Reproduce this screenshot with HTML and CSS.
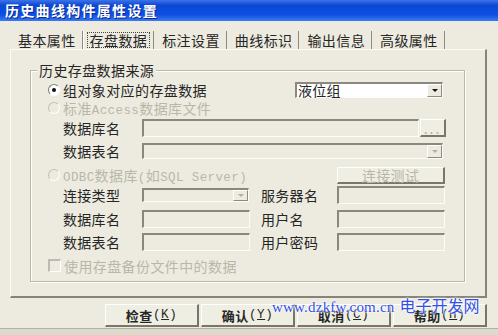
FILE: index.html
```html
<!DOCTYPE html>
<html lang="zh">

<head>
    <meta charset="UTF-8">
    <title>历史曲线构件属性设置</title>
    <link rel="stylesheet" href="styles.css">
</head>

<body>
    <div class="window">
        <div class="titlebar">历史曲线构件属性设置</div>

        <div class="client">
            <div class="tabs">
                <div class="tab">基本属性</div>
                <div class="tab active"><span class="focus">存盘数据</span></div>
                <div class="tab">标注设置</div>
                <div class="tab">曲线标识</div>
                <div class="tab">输出信息</div>
                <div class="tab">高级属性</div>
            </div>

            <div class="panel">
                <div class="group">
                    <span class="legend">历史存盘数据来源</span>

                    <div class="row row-short">
                        <span class="radio checked"></span>
                        <span class="opt">组对象对应的存盘数据</span>
                        <div class="combo combo-top">
                            <span class="combo-text">液位组</span>
                            <span class="drop"><span class="tri"></span></span>
                        </div>
                    </div>

                    <div class="row row-short">
                        <span class="radio disabled"></span>
                        <span class="opt off">标准<span class="lat">Access</span>数据库文件</span>
                    </div>

                    <div class="row">
                        <span class="label">数据库名</span>
                        <span class="field field-path"></span>
                        <span class="btn btn-dots">...</span>
                    </div>

                    <div class="row row-combo">
                        <span class="label">数据表名</span>
                        <div class="combo combo-table">
                            <span class="drop"><span class="tri off"></span></span>
                        </div>
                    </div>

                    <div class="row">
                        <span class="radio disabled"></span>
                        <span class="opt off opt-odbc"><span class="lat">ODBC</span>数据库<span class="lat">(</span>如<span class="lat">SQL Server)</span></span>
                        <span class="btn btn-test">连接测试</span>
                    </div>

                    <div class="row">
                        <span class="label">连接类型</span>
                        <div class="combo combo-type">
                            <span class="drop"><span class="tri off"></span></span>
                        </div>
                        <span class="label label-right">服务器名</span>
                        <span class="field field-small"></span>
                    </div>

                    <div class="row">
                        <span class="label">数据库名</span>
                        <span class="field field-small"></span>
                        <span class="label label-right">用户名</span>
                        <span class="field field-small"></span>
                    </div>

                    <div class="row">
                        <span class="label">数据表名</span>
                        <span class="field field-small"></span>
                        <span class="label label-right">用户密码</span>
                        <span class="field field-small"></span>
                    </div>

                    <div class="row row-short">
                        <span class="check"></span>
                        <span class="opt off">使用存盘备份文件中的数据</span>
                    </div>
                </div>
            </div>

            <div class="actions">
                <span class="btn btn-main">检查<span class="lat">(<u>K</u>)</span></span>
                <span class="btn btn-main">确认<span class="lat">(<u>Y</u>)</span></span>
                <span class="btn btn-main">取消<span class="lat">(<u>C</u>)</span></span>
                <span class="btn btn-main">帮助<span class="lat">(<u>H</u>)</span></span>
            </div>
        </div>

        <div class="bottom"></div>

        <div class="watermark"><span class="wm-url">www.dzkfw.com.cn</span> <span class="wm-name">电子开发网</span></div>
    </div>
</body>

</html>
```

FILE: styles.css
```css
body {
    margin: 0;
    font-family: "Noto Sans CJK SC", sans-serif;
    font-size: 14px;
    color: #262626;
}

.window {
    position: relative;
    width: 498px;
    height: 335px;
    background-color: #edebdf;
    display: flex;
    flex-direction: column;
    overflow: hidden;
}

.titlebar {
    height: 21px;
    line-height: 21px;
    padding-left: 5px;
    color: #fff;
    font-weight: bold;
    letter-spacing: 1.3px;
    text-shadow: 1px 1px 0 #0a2a90;
    background: linear-gradient(#3d74e6, #0b48d6 25%, #0d4fe2 70%, #3a7af4);
}

.client {
    flex: 1;
    padding: 10px 11px 0 10px;
    display: flex;
    flex-direction: column;
}

.lat {
    font-family: "Liberation Mono", monospace;
    font-size: 12.5px;
}

/* tabs */
.tabs {
    display: flex;
    height: 18px;
}

.tab {
    padding: 0 6px 0 7px;
    line-height: 18px;
    border-right: 1px solid #8d8b80;
    border-left: 1px solid transparent;
    letter-spacing: 0.4px;
}

.tab.active {
    border-left-color: #fff;
    padding: 0 4px;
}

.focus {
    display: inline-block;
    line-height: 14px;
    padding: 0 2px;
    outline: 1px dotted #444;
}

.panel {
    height: 226px;
    border-top: 1px solid #fbfbf6;
    border-left: 1px solid #fbfbf6;
    border-right: 2px solid #85837a;
    border-bottom: 2px solid #85837a;
    padding: 20px 0 0 19px;
}

/* group box */
.group {
    position: relative;
    width: 416px;
    height: 199px;
    border: 1px solid #b9b7aa;
    box-shadow: 1px 1px 0 #fff, inset 1px 1px 0 #fff;
    padding: 11px 0 0 17px;
    display: grid;
    grid-template-rows: 18px 19px 24px 23px 20px 24px 23px 25px 14px;
    align-items: start;
}

.legend {
    position: absolute;
    top: -10px;
    left: 6px;
    padding: 0 2px;
    background-color: #edebdf;
    line-height: 18px;
    letter-spacing: 0.4px;
}

.row {
    display: flex;
    align-items: center;
    height: 18px;
}

.row-short {
    height: 15px;
}

.row-combo {
    height: 16px;
}

.opt {
    margin-left: 3px;
    letter-spacing: 0.4px;
    white-space: nowrap;
}

.opt-odbc {
    width: 274px;
}

.off {
    color: #b9b7aa;
}

.label {
    width: 79px;
    flex: none;
    margin-left: 15px;
    letter-spacing: 0.3px;
}

.label-right {
    width: 76px;
    margin-left: 11px;
}

/* radio / check */
.radio {
    width: 10px;
    height: 10px;
    border-radius: 50%;
    border: 1px solid;
    border-color: #7d7b70 #fff #fff #7d7b70;
    background-color: #fff;
    display: flex;
    align-items: center;
    justify-content: center;
}

.radio.checked::after {
    content: "";
    width: 4px;
    height: 4px;
    border-radius: 50%;
    background-color: #111;
}

.radio.disabled {
    border-color: #c2c0b3 #fff #fff #c2c0b3;
    background-color: #edebdf;
}

.check {
    width: 10px;
    height: 10px;
    border: 1px solid;
    border-color: #bdbbaf #fff #fff #bdbbaf;
    border-top-width: 2px;
    border-left-width: 2px;
}

/* fields */
.field,
.combo {
    box-sizing: border-box;
    height: 18px;
    flex: none;
    border-style: solid;
    border-width: 2px 1px 1px 2px;
    border-color: #8a887e #fdfdf8 #fdfdf8 #8a887e;
}

.field-path {
    width: 277px;
}

.field-small {
    width: 108px;
}

.combo {
    display: flex;
    justify-content: flex-end;
    align-items: stretch;
    height: 16px;
}

.combo-top {
    width: 148px;
    margin-left: 88px;
    background-color: #fff;
    justify-content: space-between;
}

.combo-text {
    line-height: 13px;
    padding-left: 1px;
    letter-spacing: 0.3px;
}

.combo-table {
    width: 301px;
}

.combo-type {
    width: 107px;
    height: 14px;
    margin-right: 1px;
}

.drop {
    width: 13px;
    background-color: #edebdf;
    border-top: 1px solid #fff;
    border-left: 1px solid #fff;
    border-right: 1px solid #8d8b80;
    border-bottom: 1px solid #8d8b80;
    display: flex;
    align-items: center;
    justify-content: center;
}

.tri {
    width: 0;
    height: 0;
    border-left: 3px solid transparent;
    border-right: 3px solid transparent;
    border-top: 3px solid #111;
}

.tri.off {
    border-top-color: #b3b1a4;
}

/* buttons */
.btn {
    box-sizing: border-box;
    display: flex;
    flex: none;
    align-items: center;
    justify-content: center;
    background-color: #efeee3;
    border-top: 1px solid #fff;
    border-left: 1px solid #fff;
    border-right: 2px solid #78766c;
    border-bottom: 2px solid #78766c;
}

.btn-dots {
    width: 26px;
    height: 18px;
    margin-left: 1px;
    color: #b5b3a6;
    letter-spacing: 2px;
}

.btn-test {
    width: 108px;
    height: 17px;
    color: #b9b7aa;
    letter-spacing: 0.3px;
}

.actions {
    display: flex;
    justify-content: flex-end;
    gap: 2px;
    margin-top: 6px;
}

.btn-main {
    width: 94px;
    height: 23px;
    font-weight: bold;
    font-size: 13px;
    letter-spacing: 0.6px;
}

.btn-main .lat {
    font-weight: normal;
}

.bottom {
    height: 6px;
    border-top: 1px solid #b3b1a4;
    background-color: #dcdacd;
}

.watermark {
    position: absolute;
    left: 272px;
    top: 293px;
    color: #3350e6;
    text-shadow: 0 0 2px #fff, 0 0 2px #fff, 0 0 3px #fff;
    white-space: nowrap;
}

.wm-url {
    font-family: "Liberation Serif", serif;
    font-size: 15px;
    letter-spacing: 0.2px;
}

.wm-name {
    font-size: 16px;
    margin-left: 2px;
}
```
